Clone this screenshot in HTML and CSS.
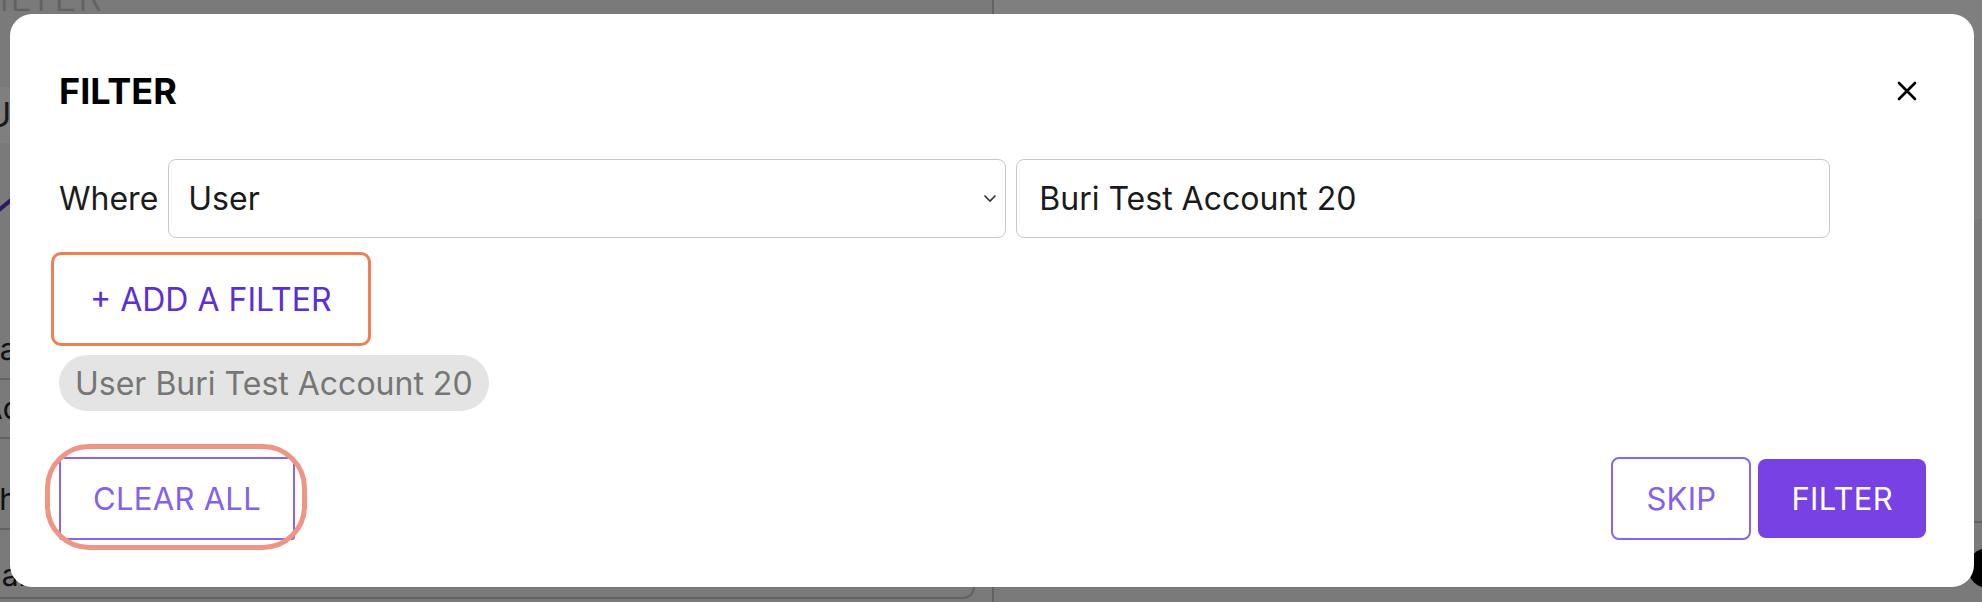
FILE: index.html
```html
<!DOCTYPE html>
<html lang="en">
<head>
    <meta charset="UTF-8">
    <meta name="viewport" content="width=device-width, initial-scale=1.0">
    <title>Filter</title>
    <link rel="stylesheet" href="styles.css">
</head>
<body>
    <!-- page under the dialog -->
    <div class="page">
        <div class="page-main">
            <div class="page-title">FILTER</div>
            <div class="page-search">Users</div>
            <div class="page-toggle"><span class="page-chevron"></span></div>
            <div class="page-row">name</div>
            <div class="page-row">Admin</div>
            <div class="page-row tall">check</div>
            <div class="page-row last">name</div>
        </div>
        <div class="page-side">
            <div class="side-panel"></div>
            <div class="side-body"></div>
        </div>
    </div>
    <span class="help-bubble"></span>

    <div class="backdrop"></div>

    <div class="dialog">
        <div class="dialog-head">
            <h2>FILTER</h2>
            <button class="close-btn" aria-label="Close">
                <svg width="20" height="20" viewBox="0 0 20 20">
                    <path d="M2 2 L18 18 M18 2 L2 18" stroke="#000" stroke-width="2.6" stroke-linecap="round"/>
                </svg>
            </button>
        </div>

        <div class="where-row">
            <label class="where-label">Where</label>
            <div class="select-box">
                <span>User</span>
                <svg width="14" height="9" viewBox="0 0 14 9">
                    <path d="M1.5 1.5 L7 7 L12.5 1.5" fill="none" stroke="#333" stroke-width="1.6"/>
                </svg>
            </div>
            <input class="text-input" type="text" value="Buri Test Account 20">
        </div>

        <button class="add-filter">+ ADD A FILTER</button>

        <div class="chips">
            <span class="chip">User Buri Test Account 20</span>
        </div>

        <div class="dialog-actions">
            <div class="clear-wrap">
                <button class="btn btn-outline btn-clear">CLEAR ALL</button>
                <span class="ring"></span>
            </div>
            <div class="actions-right">
                <button class="btn btn-outline btn-skip">SKIP</button>
                <button class="btn btn-primary">FILTER</button>
            </div>
        </div>
    </div>
</body>
</html>
```

FILE: styles.css
```css
body {
    margin: 0;
    height: 602px;
    overflow: hidden;
    font-family: Inter, 'Noto Sans', sans-serif;
    background: #f5f5f5;
    color: #1c1c1c;
}

/* Page behind the modal */
.page {
    display: grid;
    grid-template-columns: 975px 1fr;
    column-gap: 17px;
    height: 602px;
}

.page-main {
    margin-left: -24px;
}

.page-title {
    font-size: 38px;
    font-weight: 300;
    line-height: 40px;
    margin-top: -23px;
    color: #c4c4c4;
    letter-spacing: 1px;
}

.page-search {
    margin-top: 70px;
    height: 56px;
    background: #fff;
    font-size: 34px;
    line-height: 56px;
    color: #333;
    padding-left: 10px;
}

.page-toggle {
    height: 118px;
    padding-top: 60px;
}

.page-chevron {
    display: block;
    width: 22px;
    height: 4px;
    margin-left: 18px;
    background: #5a34b8;
    transform: rotate(-40deg);
}

.page-row {
    height: 57px;
    border-bottom: 2px solid #c4c4c4;
    font-size: 30px;
    line-height: 57px;
    color: #222;
    padding-left: 6px;
}

.page-row.tall {
    height: 89px;
    line-height: 120px;
}

.page-row.last {
    height: 67px;
    line-height: 90px;
    border: 2px solid #c4c4c4;
    border-top: none;
    border-radius: 0 0 12px 12px;
}

.page-side {
    border-left: 2px solid #c4c4c4;
}

.side-panel {
    height: 219px;
    background: #fff;
}

.side-body {
    height: 302px;
    border-bottom: 2px solid #c4c4c4;
}

.help-bubble {
    position: fixed;
    right: -26px;
    bottom: 14px;
    width: 40px;
    height: 40px;
    border-radius: 50%;
    background: #000;
}

.backdrop {
    position: fixed;
    inset: 0;
    background: rgba(0, 0, 0, 0.5);
}

/* Dialog */
.dialog {
    position: fixed;
    left: 10px;
    top: 14px;
    width: 1964px;
    height: 573px;
    box-sizing: border-box;
    padding: 55px 48px 47px 49px;
    background: #fff;
    border-radius: 22px;
    display: flex;
    flex-direction: column;
}

.dialog-head {
    display: flex;
    align-items: center;
    justify-content: space-between;
    height: 44px;
}

.dialog-head h2 {
    margin: 0;
    font-size: 36px;
    font-weight: 700;
    line-height: 44px;
    color: #000;
}

.close-btn {
    width: 38px;
    height: 38px;
    padding: 0;
    border: none;
    background: none;
    display: flex;
    align-items: center;
    justify-content: center;
}

.where-row {
    display: flex;
    align-items: center;
    gap: 10px;
    margin-top: 46px;
}

.where-label {
    font-size: 32px;
    color: #1c1c1c;
}

.select-box {
    width: 838px;
    height: 79px;
    box-sizing: border-box;
    border: 1.5px solid #c9c9c9;
    border-radius: 8px;
    padding: 0 8px 0 19px;
    display: flex;
    align-items: center;
    justify-content: space-between;
    font-size: 32px;
    color: #1a1a1a;
}

.text-input {
    width: 814px;
    height: 79px;
    box-sizing: border-box;
    border: 1.5px solid #c9c9c9;
    border-radius: 8px;
    padding: 0 0 0 22px;
    font-family: inherit;
    font-size: 32px;
    color: #1a1a1a;
    outline: none;
}

.add-filter {
    align-self: flex-start;
    margin: 14px 0 0 -8px;
    height: 94px;
    padding: 0 36px;
    border: 3px solid #ef7f52;
    border-radius: 10px;
    background: #fff;
    color: #5b2fd6;
    font-family: inherit;
    font-size: 32px;
}

.chips {
    margin-top: 9px;
    display: flex;
}

.chip {
    height: 56px;
    padding: 0 16px;
    border-radius: 28px;
    background: #e4e4e4;
    color: #767676;
    font-size: 32px;
    display: flex;
    align-items: center;
}

.dialog-actions {
    margin-top: auto;
    display: flex;
    align-items: center;
    justify-content: space-between;
}

.clear-wrap {
    position: relative;
    display: flex;
}

.btn {
    font-family: inherit;
    font-size: 31px;
    padding: 0 33px;
    letter-spacing: 0.3px;
}

.btn-outline {
    height: 83px;
    background: #fff;
    border: 2px solid #8865f0;
    border-radius: 8px;
    color: #8360ef;
}

.btn-clear {
    border-radius: 3px;
    padding: 0 32px;
}

.btn-primary {
    height: 79px;
    border: none;
    border-radius: 8px;
    background: #7741e3;
    color: #fff;
}

.actions-right {
    display: flex;
    align-items: center;
    gap: 7px;
}

/* highlight ring drawn over the clear button */
.ring {
    position: absolute;
    left: -14px;
    top: -13px;
    right: -12px;
    bottom: -10px;
    border: 5px solid #ef9585;
    border-radius: 44px;
    pointer-events: none;
}
```
